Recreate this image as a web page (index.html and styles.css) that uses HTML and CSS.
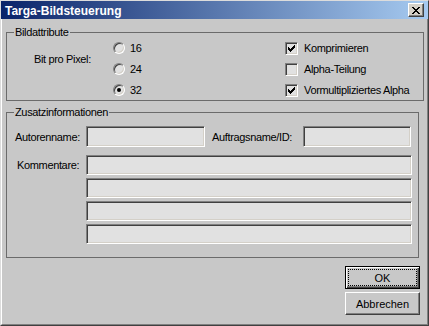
FILE: index.html
```html
<!DOCTYPE html>
<html lang="de">
<head>
  <meta charset="UTF-8">
  <meta name="viewport" content="width=device-width, initial-scale=1.0">
  <title>Targa-Bildsteuerung</title>
  <link rel="stylesheet" href="styles.css">
</head>
<body>

  <div class="window">
    <div class="titlebar">
      <span class="title">Targa-Bildsteuerung</span>
      <button class="close-btn" aria-label="Schließen">
        <svg width="8" height="7" viewBox="0 0 8 7" shape-rendering="crispEdges">
          <path d="M0 0h2v1H0z M6 0h2v1H6z M1 1h2v1H1z M5 1h2v1H5z M2 2h4v1H2z M3 3h2v1H3z M2 4h4v1H2z M1 5h2v1H1z M5 5h2v1H5z M0 6h2v1H0z M6 6h2v1H6z" fill="#000"/>
        </svg>
      </button>
    </div>

    <div class="client">
      <!-- Bildattribute -->
      <fieldset class="group group-attr">
        <legend>Bildattribute</legend>
        <div class="attr-grid">
          <span class="bpp-label">Bit pro Pixel:</span>

          <label class="option radio-1"><span class="radio"></span>16</label>
          <label class="option radio-2"><span class="radio"></span>24</label>
          <label class="option radio-3"><span class="radio checked"></span>32</label>

          <label class="option check-1"><span class="checkbox"><svg width="7" height="7" viewBox="0 0 7 7" shape-rendering="crispEdges"><path d="M6 0h1v1H6z M5 1h2v1H5z M0 2h1v1H0z M4 2h3v1H4z M0 3h2v1H0z M3 3h3v1H3z M0 4h5v1H0z M1 5h3v1H1z M2 6h1v1H2z" fill="#000"/></svg></span>Komprimieren</label>
          <label class="option check-2"><span class="checkbox"></span>Alpha-Teilung</label>
          <label class="option check-3"><span class="checkbox"><svg width="7" height="7" viewBox="0 0 7 7" shape-rendering="crispEdges"><path d="M6 0h1v1H6z M5 1h2v1H5z M0 2h1v1H0z M4 2h3v1H4z M0 3h2v1H0z M3 3h3v1H3z M0 4h5v1H0z M1 5h3v1H1z M2 6h1v1H2z" fill="#000"/></svg></span>Vormultipliziertes Alpha</label>
        </div>
      </fieldset>

      <!-- Zusatzinformationen -->
      <fieldset class="group group-info">
        <legend>Zusatzinformationen</legend>
        <div class="info-body">
          <div class="info-row">
            <span class="lbl-author">Autorenname:</span>
            <input type="text" class="field field-author">
            <span class="lbl-job">Auftragsname/ID:</span>
            <input type="text" class="field field-job">
          </div>
          <div class="comments-row">
            <span class="lbl-comments">Kommentare:</span>
            <div class="comment-list">
              <input type="text" class="field field-comment">
              <input type="text" class="field field-comment">
              <input type="text" class="field field-comment">
              <input type="text" class="field field-comment">
            </div>
          </div>
        </div>
      </fieldset>

      <div class="actions">
        <button class="btn btn-default"><span class="focus-ring">OK</span></button>
        <button class="btn">Abbrechen</button>
      </div>
    </div>
  </div>

</body>
</html>
```

FILE: styles.css
```css
* {
  box-sizing: border-box;
}

body {
  margin: 0;
  background-color: #c8c8c8;
  font-family: "Liberation Sans", Arial, sans-serif;
  font-size: 11px;
  letter-spacing: -0.35px;
  color: #000;
}

.window {
  width: 429px;
  height: 326px;
  display: flex;
  flex-direction: column;
  border: 1px solid;
  border-color: #dcdcdc #404040 #404040 #dcdcdc;
  background-color: #c8c8c8;
}

.titlebar {
  flex: none;
  height: 18px;
  display: flex;
  align-items: center;
  justify-content: space-between;
  padding: 0 4px 0 4px;
  background: linear-gradient(to right, #0a246a, #a6caf0);
}

.title {
  color: #fff;
  font-weight: bold;
  font-size: 12px;
  letter-spacing: 0;
  padding-top: 2px;
}

.close-btn {
  width: 16px;
  height: 14px;
  padding: 0;
  display: flex;
  align-items: center;
  justify-content: center;
  background-color: #d4d0c8;
  border: 1px solid;
  border-color: #fff #404040 #404040 #fff;
  box-shadow: inset -1px -1px #808080;
}

.client {
  flex: 1;
  padding: 7px 0 0 4px;
  border-left: 1px solid #fff;
  border-right: 1px solid #808080;
  border-bottom: 1px solid #808080;
}

/* Gruppenrahmen */
.group {
  margin: 0;
  padding: 0;
  min-width: 0;
  border: 1px solid #6b6b6b;
}

.group legend {
  margin-left: 7px;
  padding: 0 1px;
  line-height: 12px;
}

.group-attr {
  width: 418px;
}

.group-info {
  width: 413px;
  margin-top: 5px;
}

.attr-grid {
  display: grid;
  grid-template-columns: 79px 172px auto;
  grid-template-rows: repeat(3, 20px);
  row-gap: 1px;
  padding-left: 27px;
}

.bpp-label {
  grid-column: 1;
  grid-row: 1 / 3;
  align-self: center;
}

.option {
  display: flex;
  align-items: center;
  gap: 5px;
}

.radio-1 { grid-column: 2; grid-row: 1; }
.radio-2 { grid-column: 2; grid-row: 2; }
.radio-3 { grid-column: 2; grid-row: 3; }
.check-1 { grid-column: 3; grid-row: 1; gap: 6px; }
.check-2 { grid-column: 3; grid-row: 2; gap: 6px; }
.check-3 { grid-column: 3; grid-row: 3; gap: 6px; }

.radio {
  width: 12px;
  height: 12px;
  border-radius: 50%;
  display: flex;
  align-items: center;
  justify-content: center;
  background-color: #e1e1e1;
  border: 1px solid;
  border-color: #808080 #fff #fff #808080;
  box-shadow: inset 1px 1px #404040, inset -1px -1px #d4d0c8;
}

.radio.checked::after {
  content: "";
  width: 4px;
  height: 4px;
  border-radius: 50%;
  background-color: #000;
}

.checkbox {
  width: 13px;
  height: 13px;
  padding: 2px;
  display: flex;
  background-color: #e1e1e1;
  border: 1px solid;
  border-color: #808080 #fff #fff #808080;
  box-shadow: inset 1px 1px #404040, inset -1px -1px #d4d0c8;
}

/* Zusatzinformationen */
.info-body {
  padding: 8px 6px 13px 0;
}

.info-row {
  display: flex;
  align-items: center;
  height: 21px;
}

.lbl-author {
  width: 79px;
  padding-left: 8px;
}

.lbl-job {
  width: 98px;
  padding-left: 7px;
}

.field {
  margin: 0;
  padding: 0 3px;
  font: inherit;
  background-color: #e1e1e1;
  border: 1px solid;
  border-color: #808080 #fff #fff #808080;
  box-shadow: inset 1px 1px #404040, inset -1px -1px #d4d0c8;
  outline: none;
}

.field-author {
  width: 119px;
  height: 21px;
}

.field-job {
  width: 108px;
  height: 21px;
}

.comments-row {
  display: flex;
  margin-top: 8px;
}

.lbl-comments {
  width: 79px;
  padding-left: 10px;
  line-height: 20px;
}

.comment-list {
  display: flex;
  flex-direction: column;
  gap: 3px;
  width: 326px;
}

.field-comment {
  width: 100%;
  height: 20px;
}

/* Schaltflächen */
.actions {
  display: flex;
  flex-direction: column;
  align-items: flex-end;
  gap: 3px;
  margin-top: 8px;
  padding-right: 7px;
}

.btn {
  width: 75px;
  height: 23px;
  padding: 0;
  font: inherit;
  color: #000;
  background-color: #c8c8c8;
  border: 1px solid;
  border-color: #fff #404040 #404040 #fff;
  box-shadow: inset -1px -1px #808080;
}

.btn-default {
  padding: 2px;
  border-color: #000;
  box-shadow: inset 1px 1px #fff, inset -1px -1px #404040, inset -2px -2px #808080;
}

.focus-ring {
  display: flex;
  align-items: center;
  justify-content: center;
  width: 100%;
  height: 100%;
  border: 1px dotted #000;
}
```
